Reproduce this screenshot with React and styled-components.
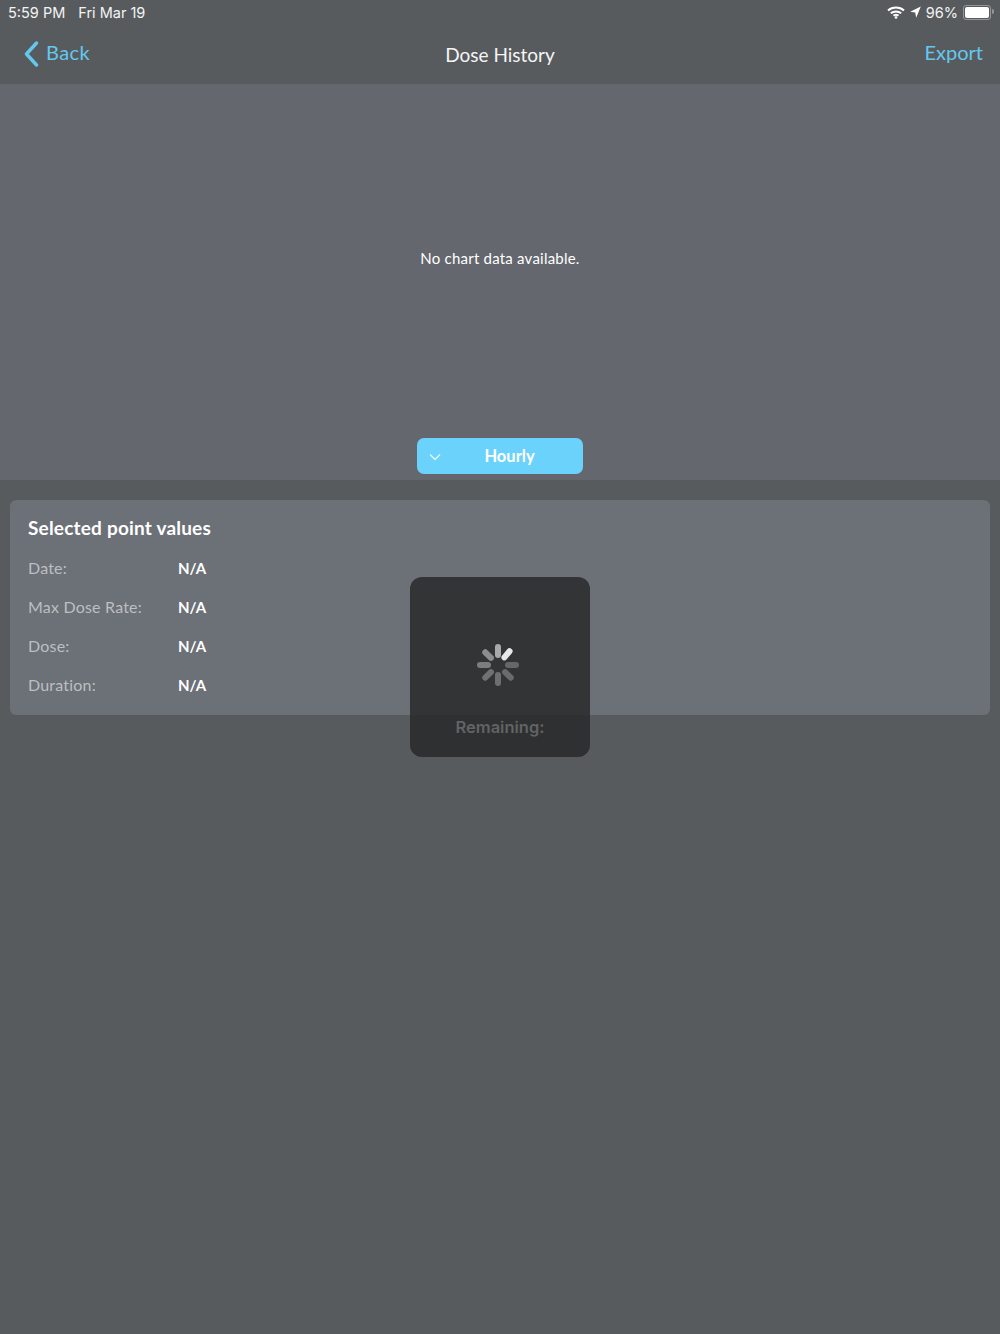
import React from "react";
import styled, { createGlobalStyle } from "styled-components";

const ACCENT = "#64c8ee";
const TEXT_FONT = `Lato, "Open Sans", sans-serif`;
const STATUS_FONT = `Inter, Roboto, sans-serif`;

const GlobalStyle = createGlobalStyle`
  html, body {
    margin: 0;
    padding: 0;
    background: #585b5e;
  }
`;

const Page = styled.div`
  position: relative;
  width: 1000px;
  height: 1334px;
  overflow: hidden;
  background: #585b5e;
  font-family: ${TEXT_FONT};
`;

const StatusBar = styled.div`
  height: 24px;
  padding: 0 6px 0 8px;
  display: flex;
  align-items: center;
  justify-content: space-between;
  color: #f2f3f3;
  font-family: ${STATUS_FONT};
  font-size: 14.5px;
`;

const StatusGroup = styled.div`
  display: flex;
  align-items: center;
  gap: ${(p) => p.$gap || 0}px;
`;

const Battery = styled.div`
  position: relative;
  width: 24px;
  height: 11px;
  padding: 1px;
  margin-right: 3px;
  border: 1px solid #94979a;
  border-radius: 3px;

  &::before {
    content: "";
    display: block;
    width: 100%;
    height: 100%;
    background: #fff;
    border-radius: 2px;
  }

  &::after {
    content: "";
    position: absolute;
    right: -4px;
    top: 3px;
    width: 2px;
    height: 5px;
    background: #94979a;
    border-radius: 0 2px 2px 0;
  }
`;

const NavBar = styled.div`
  height: 60px;
  padding: 0 17px 0 24px;
  display: grid;
  grid-template-columns: minmax(0, 1fr) auto minmax(0, 1fr);
  align-items: center;
`;

const BackLink = styled.div`
  display: flex;
  align-items: center;
  gap: 7px;
  color: ${ACCENT};
  font-size: 20px;
  letter-spacing: 0.4px;
  margin-top: -4px;

  svg {
    margin-top: 3px;
  }
`;

const NavTitle = styled.div`
  color: #f4f5f5;
  font-size: 19px;
  margin: 0 0 0 -7px;
`;

const ExportLink = styled.div`
  justify-self: end;
  color: ${ACCENT};
  font-size: 20px;
  margin-top: -4px;
`;

const ChartArea = styled.section`
  height: 396px;
  padding-bottom: 6px;
  box-sizing: border-box;
  display: flex;
  flex-direction: column;
  align-items: center;
  background: #64676e;
`;

const EmptyMessage = styled.div`
  flex: 1;
  display: flex;
  align-items: center;
  padding-bottom: 6px;
  color: #fff;
  font-size: 15px;
  letter-spacing: 0.22px;
`;

const RangeButton = styled.button`
  position: relative;
  width: 166px;
  height: 36px;
  padding: 0 0 1px 19px;
  border: 0;
  border-radius: 7px;
  background: #6bd3fb;
  color: #fff;
  font-family: ${TEXT_FONT};
  font-size: 16.5px;
  font-weight: 700;

  svg {
    position: absolute;
    left: 12px;
    top: 15px;
  }
`;

const ValuesPanel = styled.section`
  margin: 20px 10px 0;
  height: 215px;
  box-sizing: border-box;
  padding: 16px 18px 0;
  background: #6c7077;
  border-radius: 6px;
`;

const PanelTitle = styled.h2`
  margin: 0 0 8px;
  color: #fff;
  font-size: 19px;
  font-weight: 700;
  letter-spacing: 0.2px;
  line-height: 24px;
`;

const ValueRow = styled.div`
  display: grid;
  grid-template-columns: 150px 1fr;
  height: 39px;
  align-items: center;
  font-size: 16px;
`;

const ValueLabel = styled.span`
  color: #bcbfc2;
  letter-spacing: 0.2px;
`;

const ValueText = styled.span`
  color: #fff;
  font-size: 15px;
  font-weight: 700;
`;

const LoadingHud = styled.div`
  position: absolute;
  left: 410px;
  top: 577px;
  width: 180px;
  height: 180px;
  box-sizing: border-box;
  padding-top: 66px;
  display: flex;
  flex-direction: column;
  align-items: center;
  border-radius: 12px;
  background: rgba(38, 38, 38, 0.8);
`;

const SpinnerIcon = styled.svg`
  display: block;
  margin-left: -4px;
`;

const HudLabel = styled.div`
  margin-top: 30px;
  color: #626364;
  font-family: ${STATUS_FONT};
  font-size: 16.5px;
  font-weight: 600;
  line-height: 20px;
`;

// spokes clockwise from top right, brightest first
const SPOKES = [
  { angle: 40, color: "#e8e8e8" },
  { angle: 90, color: "#666768" },
  { angle: 135, color: "#6a6b6c" },
  { angle: 180, color: "#6e6f70" },
  { angle: 225, color: "#707172" },
  { angle: 270, color: "#7c7d7e" },
  { angle: 315, color: "#8c8d8e" },
  { angle: 0, color: "#a8a9aa" },
];

const Spinner = () => (
  <SpinnerIcon width="44" height="44" viewBox="-22 -22 44 44">
    {SPOKES.map((s) => (
      <line
        key={s.angle}
        x1="0"
        y1="-10"
        x2="0"
        y2="-18"
        stroke={s.color}
        strokeWidth="6"
        strokeLinecap="round"
        transform={`rotate(${s.angle})`}
      />
    ))}
  </SpinnerIcon>
);

const WifiIcon = () => (
  <svg width="18" height="13" viewBox="0 0 18 13" fill="none" stroke="#fff" strokeWidth="2">
    <path d="M1 4.600C5.500 .6 12.500 .6 17 4.600" />
    <path d="M3.800 7.300C6.700 4.800 11.300 4.800 14.200 7.300" />
    <path d="M6.500 9.800C7.900 8.700 10.100 8.700 11.500 9.800" />
    <circle cx="9" cy="11.500" r="1.300" fill="#fff" stroke="none" />
  </svg>
);

const LocationIcon = () => (
  <svg width="11" height="12" viewBox="0 0 11 12" fill="#fff">
    <path d="M10.800 .5 L0.200 5.800 L5.200 6.600 L6.200 11.800 Z" />
  </svg>
);

const App = () => {
  return (
    <Page>
      <GlobalStyle />
      <StatusBar>
        <StatusGroup $gap={13}>
          <span>5:59 PM</span>
          <span>Fri Mar 19</span>
        </StatusGroup>
        <StatusGroup $gap={5}>
          <WifiIcon />
          <LocationIcon />
          <span>96%</span>
          <Battery />
        </StatusGroup>
      </StatusBar>

      <NavBar>
        <BackLink>
          <svg width="15" height="26" viewBox="0 0 15 26" fill="none" stroke={ACCENT} strokeWidth="3.400" strokeLinecap="round" strokeLinejoin="round">
            <path d="M12.500 2 L2.500 13 L12.500 24" />
          </svg>
          Back
        </BackLink>
        <NavTitle>Dose History</NavTitle>
        <ExportLink>Export</ExportLink>
      </NavBar>

      <ChartArea>
        <EmptyMessage>No chart data available.</EmptyMessage>
        <RangeButton>
          <svg width="12" height="8" viewBox="0 0 12 8" fill="none" stroke="#dff5fe" strokeWidth="1.500">
            <path d="M1 1.500 L6 6.500 L11 1.500" />
          </svg>
          Hourly
        </RangeButton>
      </ChartArea>

      <ValuesPanel>
        <PanelTitle>Selected point values</PanelTitle>
        <ValueRow>
          <ValueLabel>Date:</ValueLabel>
          <ValueText>N/A</ValueText>
        </ValueRow>
        <ValueRow>
          <ValueLabel>Max Dose Rate:</ValueLabel>
          <ValueText>N/A</ValueText>
        </ValueRow>
        <ValueRow>
          <ValueLabel>Dose:</ValueLabel>
          <ValueText>N/A</ValueText>
        </ValueRow>
        <ValueRow>
          <ValueLabel>Duration:</ValueLabel>
          <ValueText>N/A</ValueText>
        </ValueRow>
      </ValuesPanel>

      <LoadingHud>
        <Spinner />
        <HudLabel>Remaining:</HudLabel>
      </LoadingHud>
    </Page>
  );
};

export default App;
